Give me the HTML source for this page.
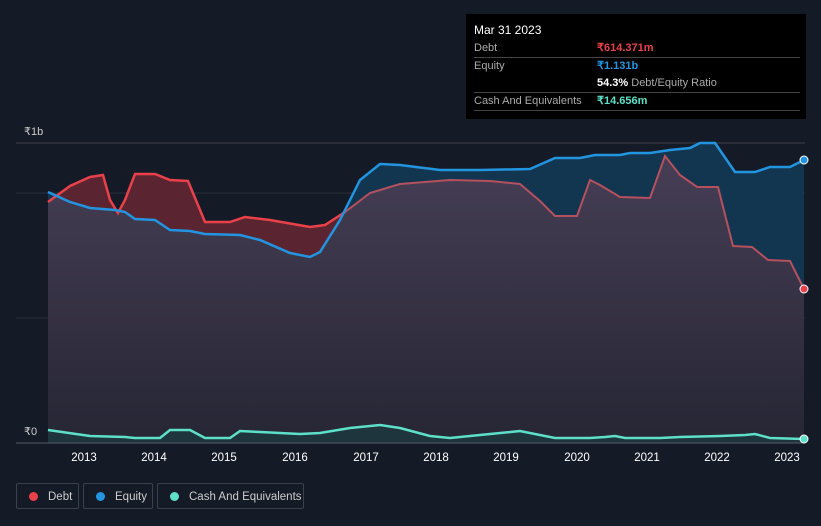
<!DOCTYPE html>
<html><head><style>
body{margin:0;background:#151b26;font-family:"Liberation Sans",sans-serif;}
.tt{position:absolute;left:466px;top:14px;width:340px;height:105px;background:#000;color:#fff;font-size:11px}
.tt .r{position:absolute;left:8px;right:6px;border-bottom:1px solid #444;height:17px;line-height:17px}
.tt span.l{color:#aaa}
.tt span.v{position:absolute;left:123px;font-weight:bold}
.lg{position:absolute;top:483px;height:26px;border:1px solid #3b404a;border-radius:2px;color:#ccc;font-size:11.5px;line-height:26px;box-sizing:border-box}
.lg i{display:inline-block;width:9px;height:9px;border-radius:50%;margin:0 10px 0 12px;vertical-align:-1px}
</style></head><body>
<svg width="821" height="526" style="position:absolute;left:0;top:0">
<defs>
<clipPath id="eq"><polygon points="48,192 70,202 90,208 115,210 125,212 135,219 155,220 170,230 190,231 205,234 240,235 260,240 290,253 310,257 320,252 340,220 360,180 380,164 400,165 440,170 480,170 530,169 555,158 580,158 595,155 620,155 630,153 650,153 670,150 690,148 700,143 715,143 735,172 755,172 770,167 790,167 804,160 804,443 48,443"/></clipPath>
<linearGradient id="g" x1="0" y1="0" x2="0" y2="1"><stop offset="0" stop-color="#463e55"/><stop offset="1" stop-color="#262634"/></linearGradient>
</defs>
<line x1="16" y1="143" x2="805" y2="143" stroke="#3a3f4a"/>
<line x1="16" y1="193" x2="805" y2="193" stroke="#2c313c"/>
<line x1="16" y1="318" x2="805" y2="318" stroke="#2c313c"/>
<polygon fill="#5a2530" points="48,202 70,186 90,177 103,175 110,200 118,213 125,200 135,174 155,174 170,180 188,181 205,222 230,222 245,217 270,220 310,227 325,225 345,212 370,193 400,184 450,180 490,181 520,184 540,201 555,216 577,216 590,180 600,185 620,197 650,198 665,156 680,175 697,187 718,187 733,246 752,247 768,260 790,261 804,289 804,443 48,443"/>
<polygon fill="#133650" points="48,192 70,202 90,208 115,210 125,212 135,219 155,220 170,230 190,231 205,234 240,235 260,240 290,253 310,257 320,252 340,220 360,180 380,164 400,165 440,170 480,170 530,169 555,158 580,158 595,155 620,155 630,153 650,153 670,150 690,148 700,143 715,143 735,172 755,172 770,167 790,167 804,160 804,443 48,443"/>
<polygon clip-path="url(#eq)" fill="url(#g)" points="48,202 70,186 90,177 103,175 110,200 118,213 125,200 135,174 155,174 170,180 188,181 205,222 230,222 245,217 270,220 310,227 325,225 345,212 370,193 400,184 450,180 490,181 520,184 540,201 555,216 577,216 590,180 600,185 620,197 650,198 665,156 680,175 697,187 718,187 733,246 752,247 768,260 790,261 804,289 804,443 48,443"/>
<polygon fill="#1e3a40" opacity="0.8" points="48,430 90,436 125,437 135,438 160,438 170,430 190,430 205,438 230,438 240,431 260,432 300,434 320,433 350,428 380,425 400,428 430,436 450,438 480,435 520,431 555,438 590,438 605,437 615,436 625,438 660,438 680,437 720,436 745,435 755,434 770,438 804,439 804,443 48,443"/>
<polyline fill="none" stroke="#b5505f" stroke-width="2" points="48,202 70,186 90,177 103,175 110,200 118,213 125,200 135,174 155,174 170,180 188,181 205,222 230,222 245,217 270,220 310,227 325,225 345,212 370,193 400,184 450,180 490,181 520,184 540,201 555,216 577,216 590,180 600,185 620,197 650,198 665,156 680,175 697,187 718,187 733,246 752,247 768,260 790,261 804,289"/>
<polyline fill="none" stroke="#e8414a" stroke-width="2.5" points="48,202 70,186 90,177 103,175 110,200 118,213 125,200 135,174 155,174 170,180 188,181 205,222 230,222 245,217 270,220 310,227 325,225 345,212"/>
<polyline fill="none" stroke="#2394df" stroke-width="2.5" points="48,192 70,202 90,208 115,210 125,212 135,219 155,220 170,230 190,231 205,234 240,235 260,240 290,253 310,257 320,252 340,220 360,180 380,164 400,165 440,170 480,170 530,169 555,158 580,158 595,155 620,155 630,153 650,153 670,150 690,148 700,143 715,143 735,172 755,172 770,167 790,167 804,160"/>
<polyline fill="none" stroke="#5ee0c8" stroke-width="2.5" points="48,430 90,436 125,437 135,438 160,438 170,430 190,430 205,438 230,438 240,431 260,432 300,434 320,433 350,428 380,425 400,428 430,436 450,438 480,435 520,431 555,438 590,438 605,437 615,436 625,438 660,438 680,437 720,436 745,435 755,434 770,438 804,439"/>
<line x1="16" y1="443" x2="805" y2="443" stroke="#555b66"/>
<circle cx="804" cy="289" r="4" fill="#e8414a" stroke="#fff" stroke-width="1"/>
<circle cx="804" cy="160" r="4" fill="#2394df" stroke="#fff" stroke-width="1"/>
<circle cx="804" cy="439" r="4" fill="#5ee0c8" stroke="#fff" stroke-width="1"/>
<g fill="#ccc" font-size="11"><text x="24" y="135">₹1b</text><text x="24" y="435">₹0</text></g>
<g fill="#fff" font-size="11.5" text-anchor="middle"><text x="84" y="461">2013</text><text x="154" y="461">2014</text><text x="224" y="461">2015</text><text x="295" y="461">2016</text><text x="366" y="461">2017</text><text x="436" y="461">2018</text><text x="506" y="461">2019</text><text x="577" y="461">2020</text><text x="647" y="461">2021</text><text x="717" y="461">2022</text><text x="787" y="461">2023</text></g>
</svg>
<div class="tt">
<div style="position:absolute;left:8px;top:9px;font-size:12px">Mar 31 2023</div>
<div class="r" style="top:26px"><span class="l">Debt</span><span class="v" style="color:#e8414a">₹614.371m</span></div>
<div class="r" style="top:44px;border:none"><span class="l">Equity</span><span class="v" style="color:#2394df">₹1.131b</span></div>
<div class="r" style="top:61px"><span class="v">54.3% <span style="color:#aaa;font-weight:normal">Debt/Equity Ratio</span></span></div>
<div class="r" style="top:79px"><span class="l">Cash And Equivalents</span><span class="v" style="color:#5ee0c8">₹14.656m</span></div>
</div>
<div class="lg" style="left:16px;width:63px"><i style="background:#e8414a"></i>Debt</div>
<div class="lg" style="left:83px;width:70px"><i style="background:#2394df"></i>Equity</div>
<div class="lg" style="left:157px;width:147px"><i style="background:#5ee0c8"></i>Cash And Equivalents</div>
</body></html>
